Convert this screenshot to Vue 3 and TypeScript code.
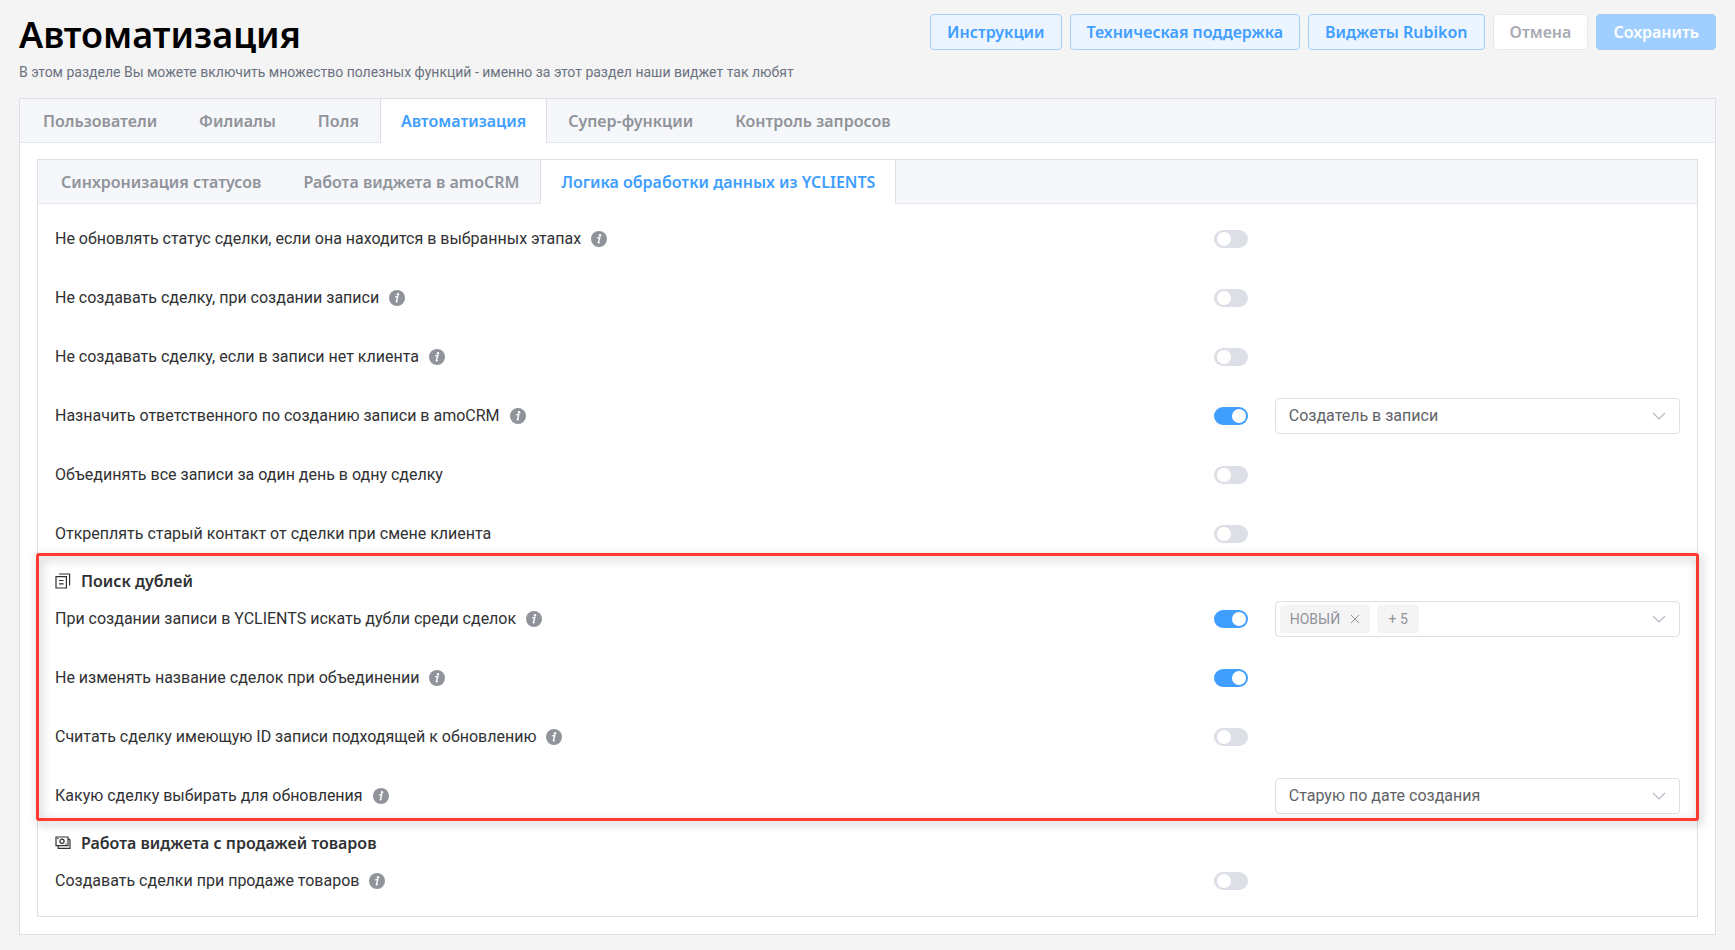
<script setup lang="ts">
import { reactive, ref } from 'vue'

interface Setting {
  id: string
  label: string
  info?: boolean
  enabled?: boolean
  options?: string[]
  tags?: string[]
  more?: number
}

interface Section {
  id: string
  title?: string
  icon?: 'copy' | 'money'
  highlighted?: boolean
  settings: Setting[]
}

const mainTabs = ['Пользователи', 'Филиалы', 'Поля', 'Автоматизация', 'Супер-функции', 'Контроль запросов']
const subTabs = ['Синхронизация статусов', 'Работа виджета в amoCRM', 'Логика обработки данных из YCLIENTS']
const activeMain = ref('Автоматизация')
const activeSub = ref('Логика обработки данных из YCLIENTS')

const sections = reactive<Section[]>([
  {
    id: 'general',
    settings: [
      { id: 'keep-status', label: 'Не обновлять статус сделки, если она находится в выбранных этапах', info: true, enabled: false },
      { id: 'no-deal', label: 'Не создавать сделку, при создании записи', info: true, enabled: false },
      { id: 'no-client', label: 'Не создавать сделку, если в записи нет клиента', info: true, enabled: false },
      { id: 'responsible', label: 'Назначить ответственного по созданию записи в amoCRM', info: true, enabled: true, options: ['Создатель в записи'] },
      { id: 'merge-day', label: 'Объединять все записи за один день в одну сделку', enabled: false },
      { id: 'detach', label: 'Откреплять старый контакт от сделки при смене клиента', enabled: false },
    ],
  },
  {
    id: 'duplicates',
    title: 'Поиск дублей',
    icon: 'copy',
    highlighted: true,
    settings: [
      { id: 'search', label: 'При создании записи в YCLIENTS искать дубли среди сделок', info: true, enabled: true, tags: ['НОВЫЙ'], more: 5 },
      { id: 'keep-name', label: 'Не изменять название сделок при объединении', info: true, enabled: true },
      { id: 'with-id', label: 'Считать сделку имеющую ID записи подходящей к обновлению', info: true, enabled: false },
      { id: 'which', label: 'Какую сделку выбирать для обновления', info: true, options: ['Старую по дате создания'] },
    ],
  },
  {
    id: 'sales',
    title: 'Работа виджета с продажей товаров',
    icon: 'money',
    settings: [
      { id: 'goods', label: 'Создавать сделки при продаже товаров', info: true, enabled: false },
    ],
  },
])
</script>

<template>
  <div class="page">
    <header class="top">
      <div>
        <h1>Автоматизация</h1>
        <p class="subtitle">В этом разделе Вы можете включить множество полезных функций - именно за этот раздел наши виджет так любят</p>
      </div>
      <div class="actions">
        <button type="button" class="btn plain">Инструкции</button>
        <button type="button" class="btn plain">Техническая поддержка</button>
        <button type="button" class="btn plain">Виджеты Rubikon</button>
        <button type="button" class="btn" disabled>Отмена</button>
        <button type="button" class="btn primary" disabled>Сохранить</button>
      </div>
    </header>

    <main class="panel">
      <div class="tabs" role="tablist">
        <button v-for="t in mainTabs" :key="t" type="button" role="tab" class="tab" :class="{ active: t === activeMain }" :aria-selected="t === activeMain" @click="activeMain = t">{{ t }}</button>
      </div>
      <div class="panel-body">
        <div class="panel">
          <div class="tabs" role="tablist">
            <button v-for="t in subTabs" :key="t" type="button" role="tab" class="tab" :class="{ active: t === activeSub }" :aria-selected="t === activeSub" @click="activeSub = t">{{ t }}</button>
          </div>
          <div class="settings">
            <section v-for="s in sections" :key="s.id" class="section" :class="{ highlighted: s.highlighted }">
              <h2 v-if="s.title">
                <svg v-if="s.icon === 'copy'" viewBox="0 0 16 16" width="16" height="16" fill="none" stroke="currentColor" stroke-width="1.2" aria-hidden="true">
                  <path d="M1 3.6h10.4V15H1zM4 1h10.6v11.4M4 7.5h4.6M4 10.8h4.6" />
                </svg>
                <svg v-else viewBox="0 0 16 16" width="16" height="16" fill="none" stroke="currentColor" stroke-width="1.2" aria-hidden="true">
                  <path d="M1 2h12v8.6H1zM15 4.4v9H3.2v-2.8M13 4.4h2" />
                  <circle cx="7" cy="6.3" r="2.1" />
                  <path d="M2.4 3.6h1.2M10.4 9h1.2" />
                </svg>
                {{ s.title }}
              </h2>
              <div class="rows">
                <div v-for="row in s.settings" :key="row.id" class="row">
                  <div class="name">
                    <label :for="row.id">{{ row.label }}</label>
                    <svg v-if="row.info" class="info" viewBox="0 0 16 16" width="16" height="16" aria-hidden="true">
                      <circle cx="8" cy="8" r="8" fill="#909399" />
                      <circle cx="9" cy="4.2" r="1.2" fill="#fff" />
                      <path d="M6.2 6.9l2.6-.5-1.4 5.1q-.2.9 1.3-.2" fill="none" stroke="#fff" stroke-width="1.4" />
                    </svg>
                  </div>
                  <div class="toggle">
                    <input v-if="row.enabled !== undefined" :id="row.id" v-model="row.enabled" type="checkbox" role="switch" class="switch">
                  </div>
                  <div v-if="row.options" class="field">
                    <select :id="row.enabled === undefined ? row.id : row.id + '-value'" :aria-label="row.label">
                      <option v-for="o in row.options" :key="o">{{ o }}</option>
                    </select>
                    <svg class="chevron" viewBox="0 0 14 14" width="14" height="14" fill="none" stroke="#b4b8c0" stroke-width="1.2" aria-hidden="true"><path d="M1 4l6 6 6-6" /></svg>
                  </div>
                  <div v-else-if="row.tags" class="field multi" role="combobox" tabindex="0" aria-expanded="false" :aria-label="row.label">
                    <span v-for="t in row.tags" :key="t" class="tag">{{ t }}
                      <button type="button" aria-label="Удалить">
                        <svg viewBox="0 0 10 10" width="10" height="10" fill="none" stroke="currentColor" aria-hidden="true"><path d="M1 1l8 8M9 1L1 9" /></svg>
                      </button>
                    </span>
                    <span class="tag">+ {{ row.more }}</span>
                    <svg class="chevron" viewBox="0 0 14 14" width="14" height="14" fill="none" stroke="#b4b8c0" stroke-width="1.2" aria-hidden="true"><path d="M1 4l6 6 6-6" /></svg>
                  </div>
                </div>
              </div>
            </section>
          </div>
        </div>
      </div>
    </main>
  </div>
</template>

<style>
body {
  background: #f4f4f4;
}
</style>

<style scoped>
.page {
  padding: 14px 19px 16px;
  font: 400 16px/20px Roboto, "Noto Sans", sans-serif;
  color: #303133;
}

.page *,
.page *::before,
.page *::after {
  box-sizing: border-box;
}

.top {
  display: flex;
  justify-content: space-between;
  align-items: flex-start;
  margin-bottom: 17px;
}

h1 {
  margin: 0;
  font: 600 36px/42px "Noto Sans", Roboto, sans-serif;
  color: #000;
}

.subtitle {
  margin: 7px 0 0;
  font-size: 14px;
  line-height: 18px;
  color: #6b7280;
}

.actions {
  display: flex;
  gap: 8px;
}

.btn {
  height: 36px;
  padding: 0 16px;
  border: 1px solid #e4e7ed;
  border-radius: 4px;
  background: #fff;
  font: 600 16px/20px "Noto Sans", Roboto, sans-serif;
  color: #a8abb2;
  white-space: nowrap;
}

.btn.plain {
  border-color: #a0cfff;
  background: #ecf5ff;
  color: #409eff;
}

.btn.primary {
  border-color: #a0cfff;
  background: #a0cfff;
  color: #fff;
}

.panel {
  border: 1px solid #dcdfe6;
  background: #fff;
}

.panel-body {
  padding: 16px 17px 17px;
}

.tabs {
  display: flex;
  height: 44px;
  border-bottom: 1px solid #e4e7ed;
  background: #f5f7fb;
}

.tab {
  height: 44px;
  padding: 0 20px;
  border: 1px solid transparent;
  border-width: 0 1px;
  background: transparent;
  font: 600 16px/20px "Noto Sans", Roboto, sans-serif;
  color: #909399;
  white-space: nowrap;
}

.tab:first-child {
  padding-left: 23px;
  border-left: 0;
}

.tab.active {
  border-color: #dcdfe6;
  background: #fff;
  color: #409eff;
}

.settings {
  padding: 17px;
}

.section {
  position: relative;
}

.section + .section {
  margin-top: 19px;
}

.section.highlighted::after {
  content: "";
  position: absolute;
  inset: -18px -19px -7px;
  border: 3px solid #ff3b30;
  border-radius: 3px;
  filter: drop-shadow(2px 3px 5px rgba(0, 0, 0, 0.3));
  pointer-events: none;
}

h2 {
  display: flex;
  align-items: center;
  gap: 10px;
  margin: 0 0 10px;
  font: 600 16px/20px "Noto Sans", Roboto, sans-serif;
}

.rows {
  display: grid;
  gap: 23px;
}

.row {
  display: grid;
  grid-template-columns: minmax(0, 1fr) 61px calc(25% - 1px);
  align-items: center;
  height: 36px;
}

.name {
  display: flex;
  align-items: center;
  gap: 10px;
}

.info {
  flex: none;
}

.toggle {
  display: flex;
}

.switch {
  appearance: none;
  width: 34px;
  height: 18px;
  margin: 0;
  padding: 2px 3px;
  border-radius: 9px;
  background: #dcdfe6;
}

.switch::before {
  content: "";
  display: block;
  width: 14px;
  height: 14px;
  border-radius: 50%;
  background: #fff;
}

.switch:checked {
  padding-right: 2px;
  background: #409eff;
}

.switch:checked::before {
  margin-left: auto;
}

.field {
  position: relative;
  height: 36px;
}

select,
.multi {
  width: 100%;
  height: 36px;
  border: 1px solid #dcdfe6;
  border-radius: 4px;
  background: #fff;
}

select {
  appearance: none;
  padding: 0 40px 0 13px;
  font: inherit;
  color: #606266;
}

.multi {
  display: flex;
  align-items: center;
  gap: 7px;
  padding: 0 4px;
}

.chevron {
  position: absolute;
  top: 50%;
  right: 14px;
  margin-top: -7px;
  pointer-events: none;
}

.multi .chevron {
  right: 13px;
}

.tag {
  display: flex;
  align-items: center;
  justify-content: center;
  gap: 10px;
  min-width: 42px;
  height: 28px;
  padding: 0 10px;
  border-radius: 4px;
  background: #f4f4f5;
  font-size: 14px;
  color: #909399;
}

.tag button {
  display: flex;
  padding: 0;
  border: 0;
  background: none;
  color: inherit;
}
</style>
